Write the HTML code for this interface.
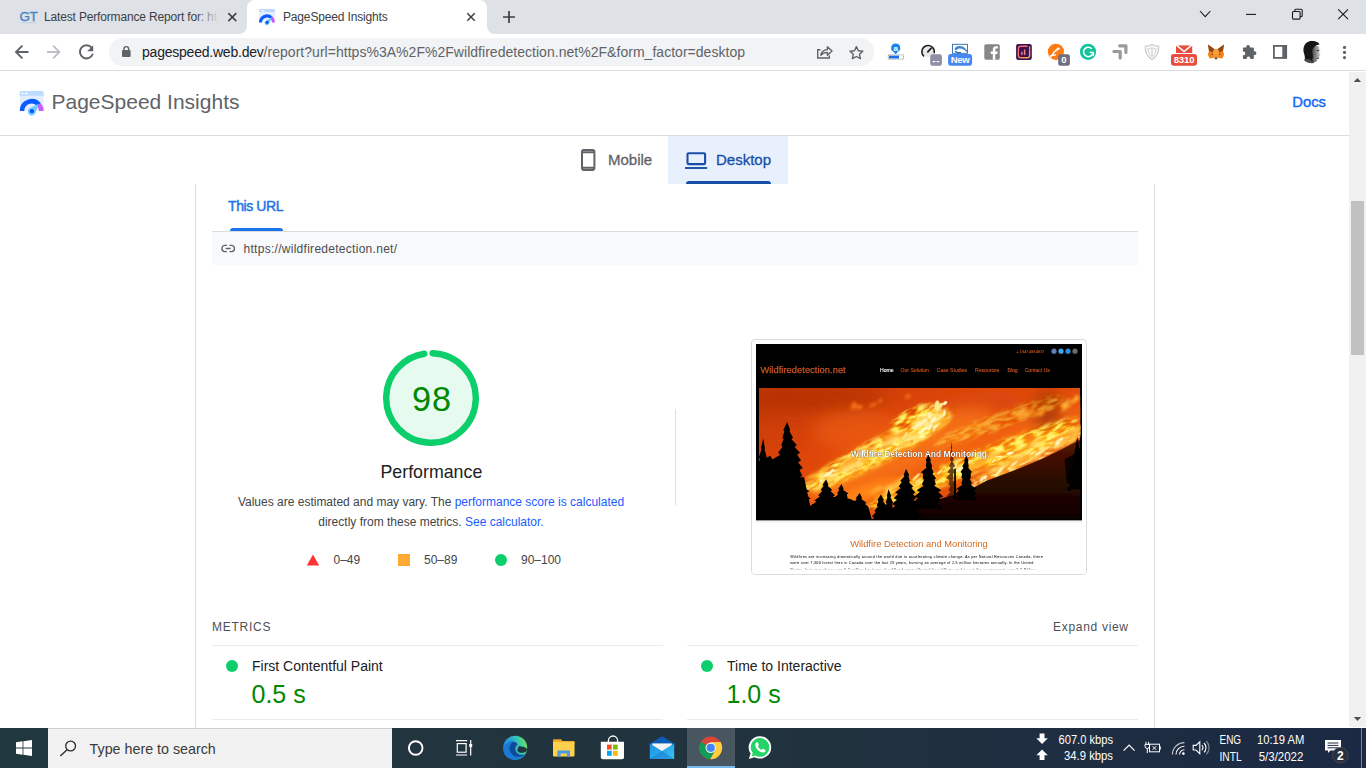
<!DOCTYPE html>
<html lang="en">
<head>
<meta charset="utf-8">
<title>PageSpeed Insights</title>
<style>
*{box-sizing:border-box;margin:0;padding:0}
html,body{width:1366px;height:768px;overflow:hidden;background:#fff;font-family:"Liberation Sans",sans-serif;color:#202124}
.abs{position:absolute}
#root{position:relative;width:1366px;height:768px;overflow:hidden;background:#fff}
/* ---------- browser chrome ---------- */
#tabstrip{left:0;top:0;width:1366px;height:34px;background:#dee1e6}
#tab-active{left:247px;top:0;width:240px;height:34px;background:#fff;border-radius:8px 8px 0 0}
.tabfoot{width:8px;height:8px;top:26px;background:#fff}
.tabfoot i{position:absolute;left:0;top:0;width:8px;height:8px;background:#dee1e6}
.tabtitle{font-size:12px;color:#3c4043;white-space:nowrap;letter-spacing:-.16px}
#toolbar{left:0;top:34px;width:1366px;height:37px;background:#fff;border-bottom:1px solid #dadce0}
#omni{left:108.500px;top:38px;width:765px;height:28px;border-radius:14px;background:#f1f3f4}
#urltext{left:142px;top:44px;font-size:14px;color:#5f6368;white-space:nowrap;letter-spacing:.03px}
#urltext b{font-weight:normal;color:#202124;letter-spacing:-.22px}
/* ---------- page ---------- */
#page{left:0;top:72px;width:1349px;height:656px;background:#fff;overflow:hidden}
#scroll{left:1349px;top:72px;width:17px;height:655px;background:#f1f1f1}
#thumb{left:1351px;top:201px;width:13px;height:153.700px;background:#c1c1c1}
#hdr{left:0;top:0;width:1349px;height:64px;border-bottom:1px solid #dadce0}
#brand{left:51.500px;top:18px;font-size:21px;color:#5f6368;white-space:nowrap}
#docs{left:1292.300px;top:22px;font-size:14.800px;color:#1068f5;font-weight:normal;-webkit-text-stroke:.4px #1068f5}
#desk{left:668px;top:64px;width:120px;height:48px;background:#e8f0fe}
#deskbar{left:686px;top:109px;width:84.500px;height:3px;background:#174ea6;border-radius:3px 3px 0 0}
.tabl{font-size:15px;white-space:nowrap;-webkit-text-stroke:.3px currentColor}
#wrap{left:195px;top:112px;width:960px;height:560px;border-left:1px solid #dadce0;border-right:1px solid #dadce0}

/* ---------- content ---------- */
#thisurl{left:228px;top:126px;font-size:14px;font-weight:normal;-webkit-text-stroke:.45px #1a73e8;letter-spacing:-.4px;color:#1a73e8;white-space:nowrap}
#thisbar{left:230px;top:156px;width:53px;height:3px;background:#1a73e8;border-radius:3px 3px 0 0}
#urlrow{left:212px;top:159px;width:926px;height:34px;background:#f8f9fa;border-top:1px solid #dadce0}
#urlrow span{position:absolute;left:31.5px;top:10px;font-size:12px;letter-spacing:.28px;color:#4a4d51;white-space:nowrap}
#perf{left:331.4px;top:390px;width:200px;text-align:center;font-size:17.8px;color:#212121;white-space:nowrap}
.desc{font-size:12px;color:#424548;white-space:nowrap;width:500px;text-align:center;left:181px}
.desc a{color:#1a5cff;text-decoration:none}
.leg{font-size:12px;color:#424548;white-space:nowrap}
#vsep{left:675px;top:337px;width:1px;height:96px;background:#e0e0e0}
#shot{left:751px;top:267px;width:336px;height:236px;border:1px solid #dadce0;border-radius:4px;background:#fff;overflow:hidden}
.mh{font-size:12px;color:#4d5156;white-space:nowrap;letter-spacing:.75px}
.mline{height:1px;background:#ebebeb;width:451px}
.mdot{width:12px;height:12px;border-radius:50%;background:#0cce6b}
.mname{font-size:14px;color:#212121;white-space:nowrap}
.mval{font-size:25px;color:#008800;white-space:nowrap}
/* ---------- taskbar ---------- */
#taskbar{left:0;top:728px;width:1366px;height:40px;background:linear-gradient(90deg,#22383f 0%,#21333e 55%,#1f2e40 75%,#1c2944 100%)}
#search{left:48px;top:728px;width:344px;height:40px;background:#f2f2f2;border-top:1px solid #cfcfcf}
#search span{position:absolute;left:40px;top:11px;font-size:15px;color:#3b3b3b;white-space:nowrap}
.tray{color:#fff;font-size:12px;white-space:nowrap}
</style>
</head>
<body>
<div id="root">

<!-- ======= TAB STRIP ======= -->
<div id="tabstrip" class="abs"></div>
<div id="tab-active" class="abs"></div>
<div class="abs tabfoot" style="left:239px"><i style="border-radius:0 0 8px 0"></i></div>
<div class="abs tabfoot" style="left:487px"><i style="border-radius:0 0 0 8px"></i></div>
<div class="abs tabtitle" style="left:44px;top:10px">Latest Performance Report for: ht</div>
<div class="abs tabtitle" style="left:283px;top:10px">PageSpeed Insights</div>
<div class="abs" style="left:196px;top:6px;width:27px;height:22px;background:linear-gradient(90deg,rgba(222,225,230,0),#dee1e6 85%)"></div>

<!-- ======= TOOLBAR ======= -->
<div id="toolbar" class="abs"></div>
<div id="omni" class="abs"></div>
<div id="urltext" class="abs"><b>pagespeed.web.dev</b>/report?url=https%3A%2F%2Fwildfiredetection.net%2F&amp;form_factor=desktop</div>


<!-- ======= CHROME ICONS ======= -->
<svg class="abs" style="left:0;top:0" width="1366" height="72" viewBox="0 0 1366 72" font-family="Liberation Sans, sans-serif">
  <!-- tab1 favicon GT -->
  <text x="19.500" y="21" font-size="13.500" fill="#4a86c5" stroke="#4a86c5" stroke-width=".4" letter-spacing="-.5">GT</text>
  <rect x="21" y="22.2" width="15" height="1" fill="#b8d0ea"/>
  <!-- tab close x -->
  <g stroke="#3c4043" stroke-width="1.5" stroke-linecap="butt"><path d="M228.300 13.100l8 8M236.300 13.100l-8 8"/><path d="M467.3 13.3l7.4 7.4M474.7 13.3l-7.4 7.4"/></g>
  <!-- new tab + -->
  <path d="M509 11v12M503 17h12" stroke="#3c4043" stroke-width="1.7"/>
  <!-- pagespeed favicon -->
  <g transform="translate(245.860 -51.630) scale(.667)">
    <rect x="19.700" y="90.900" width="24" height="16" rx="1.500" fill="#e4eeff"/>
    <path d="M19.700 92.400a1.500 1.500 0 0 1 1.500-1.500h21a1.500 1.500 0 0 1 1.500 1.500v3h-24z" fill="#bcd8ff"/>
    <circle cx="22.600" cy="93.300" r=".9" fill="#fff"/><rect x="24.600" y="92.500" width="3.400" height="1.600" rx=".8" fill="#fff"/>
    <path d="M22 111a9.700 9.700 0 0 1 16.300-7.100" fill="none" stroke="#0a5cff" stroke-width="4.600"/>
    <path d="M38.200 103.800a9.700 9.700 0 0 1 3.200 7.200" fill="none" stroke="#c255ff" stroke-width="4.600"/>
    <path d="M38.400 104.400l-3.300 8.400a3.600 3.600 0 1 1-5.400-4.200z" fill="#5cc8ff"/>
    <circle cx="31.800" cy="111.200" r="2.200" fill="#0a50f0"/>
  </g>
  <!-- window controls -->
  <g fill="none" stroke="#1b1b1b" stroke-width="1.1">
    <path d="M1200 11l5.2 5.6 5.2-5.6"/>
    <path d="M1246 14.4h10"/>
    <rect x="1292.5" y="11.5" width="7.6" height="7.6" rx="1"/>
    <path d="M1294.8 11.5v-1.3a1 1 0 0 1 1-1h5.4a1 1 0 0 1 1 1v5.4a1 1 0 0 1-1 1h-1.2"/>
    <path d="M1338.2 9.4l9.8 9.8M1348 9.4l-9.8 9.8"/>
  </g>
  <!-- nav: back / forward / reload -->
  <g fill="none" stroke="#5f6368" stroke-width="1.9">
    <path d="M28.5 52H16.6M22.4 45.6L16 52l6.4 6.4"/>
    <path d="M47 52h11.9M53.1 45.6l6.4 6.4-6.4 6.4" stroke="#bdc1c6"/>
    <path d="M91.6 47.6a6.6 6.6 0 1 0 1.2 6.2"/>
  </g>
  <path d="M93.2 45.2v6h-6z" fill="#5f6368"/>
  <!-- lock -->
  <rect x="122" y="50" width="8.6" height="7" rx="1" fill="#5f6368"/>
  <path d="M123.900 50v-1a2.400 2.400 0 0 1 4.800 0V50" fill="none" stroke="#5f6368" stroke-width="1.4"/>
  <!-- share -->
  <g fill="none" stroke="#5f6368" stroke-width="1.4">
    <path d="M820.5 49.8h-2.8v8.2h11.6v-2.4"/>
    <path d="M820.8 55.2c.6-3.6 3-5.4 6.6-5.6v-2.8l4.6 4.2-4.6 4.2v-2.8c-2.8 0-4.8.8-6.6 2.800z" stroke-linejoin="round"/>
  </g>
  <!-- star -->
  <path d="M856.4 46.6l1.9 4.1 4.5.5-3.3 3.100.9 4.400-4-2.200-4 2.200.9-4.400-3.300-3.100 4.500-.5z" fill="none" stroke="#5f6368" stroke-width="1.4" stroke-linejoin="round"/>
  <!-- ext1: blue a + ruler -->
  <path d="M895.700 43.400a4.500 4.500 0 0 1 2.300 8.400l-2.300 2.400-2.300-2.400a4.500 4.500 0 0 1 2.300-8.400z" fill="#1a83f0"/>
  <text x="895.700" y="50.600" font-size="8" font-weight="bold" fill="#fff" text-anchor="middle">a</text>
  <rect x="888.300" y="54.900" width="15.200" height="4.300" fill="#fff" stroke="#8a7f78" stroke-width=".7" stroke-dasharray="1.200 .6"/>
  <rect x="889" y="55.600" width="10" height="2.900" fill="#1a73e8"/>
  <!-- ext2: speedometer + badge -->
  <circle cx="928.100" cy="51.300" r="5.600" fill="#e9e9e9"/>
  <path d="M923.600 56.000a6.200 6.200 0 1 1 10.600-3.200" fill="none" stroke="#1f1f1f" stroke-width="1.500" stroke-linecap="round"/>
  <path d="M927.800 51.800l3.200-3.400" stroke="#1f1f1f" stroke-width="1.700" stroke-linecap="round"/>
  <rect x="930.200" y="54.200" width="11.700" height="11.600" rx="2.200" fill="#8d8fa6"/>
  <path d="M932.800 61.600h2.600M936.600 61.600h2.600" stroke="#fff" stroke-width="1.100"/>
  <text x="936" y="62" font-size="1" fill="#8d8fa6" text-anchor="middle">--</text>
  <!-- ext3: S + New badge -->
  <rect x="952.500" y="44.300" width="15" height="9" fill="#fff" stroke="#2a6cb0" stroke-width=".9"/>
  <path d="M954.500 49.500c.3-2.300 2.200-3.600 5-3.600 3.300 0 5.800 1.600 7.600 4.800v1.800c-2.200-2.800-4.600-4.100-7.200-4.100-1.600 0-2.700.6-3 1.900z" fill="#3b86c8"/>
  <path d="M955 51.200c1.500 1.300 3.800 1.700 6 1.400" fill="none" stroke="#2a6cb0" stroke-width="1.200"/>
  <rect x="948.100" y="54" width="24" height="11.800" rx="2.800" fill="#4688f1"/>
  <text x="960.100" y="63.300" font-size="9.600" font-weight="bold" fill="#fff" text-anchor="middle" letter-spacing="-.3">New</text>
  <!-- ext4: facebook grey -->
  <rect x="984.300" y="44.200" width="15.500" height="15.500" rx="1.600" fill="#878787"/>
  <path d="M995.300 59.700v-5.800h2.100l.3-2.500h-2.400v-1.500c0-.8.300-1.300 1.400-1.300h1.200v-2.200c-.2 0-1-.1-1.900-.1-1.900 0-3.200 1.200-3.200 3.300v1.800h-2.100v2.500h2.100v5.800z" fill="#fff"/>
  <!-- ext5: purple bars -->
  <defs><linearGradient id="pg" x1="0" y1="0" x2="1" y2="1"><stop offset="0" stop-color="#f0607c"/><stop offset="1" stop-color="#f8a848"/></linearGradient></defs>
  <rect x="1016.100" y="43.900" width="15.700" height="16" rx="2.200" fill="#3a1050"/>
  <path d="M1027 46.200h-6.300a2.300 2.300 0 0 0-2.300 2.300v6.900a2.300 2.300 0 0 0 2.300 2.300h6.600a2.300 2.300 0 0 0 2.300-2.300v-5.300" fill="none" stroke="url(#pg)" stroke-width="1.400" stroke-linecap="round"/>
  <path d="M1021.900 55v-3.200M1024.600 55v-5.400" stroke="#f5807a" stroke-width="1.500"/>
  <path d="M1029.600 47v2" stroke="#f8a848" stroke-width="1.400" stroke-linecap="round"/>
  <!-- ext6: orange circle + 0 badge -->
  <circle cx="1055.900" cy="51.800" r="8.100" fill="#ff7a0f"/>
  <path d="M1050.200 57.600c1.200-3.400 3.600-6.800 7.800-10.400 1 .2 1.700.9 2 1.800-3.600 1.800-6.400 4.400-8.400 8.200z M1049.800 55.400c2.200-1 4.200-1.400 6.600-1.200l-.6 1.400c-2 .1-3.800.5-5.600 1.400z" fill="#fff"/>
  <rect x="1058.200" y="54.200" width="11.700" height="11.600" rx="2.200" fill="#6e6f80"/>
  <text x="1064" y="63.300" font-size="9.600" font-weight="bold" fill="#fff" text-anchor="middle">0</text>
  <!-- ext7: grammarly -->
  <circle cx="1088" cy="51.800" r="8.100" fill="#15c39a"/>
  <path d="M1091.800 48.800a4.700 4.700 0 1 0 1 4.400" fill="none" stroke="#fff" stroke-width="1.500"/>
  <path d="M1089.600 52.400h3.800v3.600" fill="none" stroke="#fff" stroke-width="1.300"/>
  <!-- ext8: grey corner arrows -->
  <path d="M1119.600 45.800h6.300v6.600" fill="none" stroke="#9a9a9a" stroke-width="3.200" stroke-linecap="round" stroke-linejoin="round"/>
  <path d="M1113.900 51.500h6.300v6.500" fill="none" stroke="#9a9a9a" stroke-width="3.200" stroke-linecap="round" stroke-linejoin="round"/>
  <!-- ext9: shield -->
  <path d="M1152 44.600c2.200 1.200 4.400 1.600 6.800 1.600.2 6.200-1.800 10.400-6.800 13.200-5-2.800-7-7-6.800-13.200 2.400 0 4.600-.4 6.800-1.600z" fill="#fafafa" stroke="#c6c6c6" stroke-width="1.100"/>
  <path d="M1152 47.600c1.300.7 2.600 1 4 1-.1 3.600-1.300 6.400-4 8.200-2.700-1.800-3.900-4.600-4-8.200 1.400 0 2.700-.3 4-1z" fill="none" stroke="#cfcfcf" stroke-width=".9"/>
  <path d="M1152 48v8.500" stroke="#d6d6d6" stroke-width="1.400"/>
  <!-- ext10: red mail + 8310 -->
  <path d="M1176 45.400h16.200v7.600h-16.200z" fill="#e74c3c"/>
  <path d="M1176.400 45.200l7.700 6.400 7.700-6.400" fill="none" stroke="#fff" stroke-width="1.500"/>
  <rect x="1171" y="54" width="26" height="11.800" rx="2.800" fill="#e74c3c"/>
  <text x="1184" y="63.300" font-size="9.600" font-weight="bold" fill="#fff" text-anchor="middle" letter-spacing="-.2">8310</text>
  <!-- ext11: metamask fox -->
  <path d="M1208 44.600l6.200 4.400h3.600l6.200-4.400-1 6.400 1.200 3.600-1.800 4-3.600-.6-1.600 1.400h-2.400l-1.600-1.400-3.600.6-1.800-4 1.200-3.600z" fill="#f5841f"/>
  <path d="M1208 44.600l6.200 4.400-1.400 3.600-3.800-1.600z M1224 44.600l-6.200 4.400 1.400 3.600 3.800-1.600z" fill="#8f4a1c"/>
  <path d="M1212.800 52.600l1.400-3.600h3.600l1.400 3.600-1 3.800h-4.400z" fill="#f89c35"/>
  <path d="M1213.600 57.200h4.800l-.6 2.200h-3.600z" fill="#e4d2c4"/>
  <path d="M1214.800 57.600h2.400l-.4 1.200h-1.600z" fill="#161616"/>
  <path d="M1211.400 54l1.800.6M1220.600 54l-1.800.6" stroke="#5a3a22" stroke-width=".8"/>
  <!-- puzzle -->
  <path d="M1243.300 47.600h2.900v-.7a1.900 1.900 0 0 1 3.800 0v.7h2.900a1 1 0 0 1 1 1v2.700h.6a1.900 1.900 0 0 1 0 3.800h-.6v2.900a1 1 0 0 1-1 1h-2.600v-.6a1.800 1.800 0 0 0-3.600 0v.6h-2.800a1 1 0 0 1-1-1v-2.700h.5a1.900 1.900 0 0 0 0-3.800h-.5v-2.900a1 1 0 0 1 .4-1z" fill="#5f6368"/>
  <!-- side panel -->
  <rect x="1273.900" y="45.900" width="12.300" height="12" fill="none" stroke="#5f6368" stroke-width="1.800"/>
  <rect x="1282.300" y="45.500" width="4.700" height="12.800" fill="#5f6368"/>
  <!-- avatar -->
  <clipPath id="avc"><circle cx="1311.800" cy="52" r="11.200"/></clipPath>
  <filter id="avb" x="-10%" y="-10%" width="120%" height="120%"><feGaussianBlur stdDeviation=".5"/></filter>
  <linearGradient id="fcg" x1="0" y1="0" x2="1" y2="0"><stop offset="0" stop-color="#1c1c1c"/><stop offset=".45" stop-color="#6a6a6a"/><stop offset="1" stop-color="#d8d8d8"/></linearGradient>
  <g clip-path="url(#avc)"><g filter="url(#avb)">
    <rect x="1299" y="39" width="26" height="26" fill="#fefefe"/>
    <path d="M1309 48c3-2 7-2.500 10-1.500l.8 4.500-.6 1.800 1.400 2.800-1.400.8.200 1.800-1.800.8-1 2.800-7.600.4z" fill="url(#fcg)"/>
    <path d="M1303.600 52c-.8-6 2.200-10.600 7.600-11.200 4.200-.4 7.400 1 8.400 3.600-2.400.2-4.600 1.200-6 3-1.400 2-1.600 4.200-1 6.600.6 2.400.2 4.200-.6 5.800l2 2.800-3 1.400-6.400-3c.8-2.400.2-5.600-1-9z" fill="#121212"/>
    <path d="M1303 60c2.500-1.200 5-1.400 7-.6l4.500 3-3.500 3.600h-8z" fill="#4a4a4a"/>
    <path d="M1316.600 50.600l2.400-.2M1316.800 58.600l2-.4" stroke="#2a2a2a" stroke-width=".9" fill="none"/>
  </g></g>
  <!-- menu dots -->
  <g fill="#5f6368"><circle cx="1344.500" cy="47.400" r="1.600"/><circle cx="1344.500" cy="52.400" r="1.600"/><circle cx="1344.500" cy="57.600" r="1.600"/></g>
</svg>

<!-- ======= PAGE ======= -->
<div id="page" class="abs">
  <div id="hdr" class="abs"></div>
  <div id="brand" class="abs">PageSpeed Insights</div>
  <div id="docs" class="abs">Docs</div>
  <div id="desk" class="abs"></div>
  <div id="deskbar" class="abs"></div>
  <div class="abs tabl" style="left:608px;top:79px;color:#5f6368">Mobile</div>
  <div class="abs tabl" style="left:716px;top:79px;color:#174ea6">Desktop</div>

  <!-- header icons (page coords) -->
  <svg class="abs" style="left:0;top:0" width="1349" height="120" viewBox="0 72 1349 120">
    <defs><linearGradient id="wg" x1="0" y1="0" x2="0" y2="1"><stop offset="0" stop-color="#c3dafe"/><stop offset=".22" stop-color="#c3dafe"/><stop offset=".23" stop-color="#d8e7ff"/><stop offset="1" stop-color="#e6f0ff"/></linearGradient></defs>
    <rect x="19.700" y="90.900" width="24" height="20.100" rx="1.500" fill="#e2eeff"/>
    <path d="M19.700 92.400a1.500 1.500 0 0 1 1.500-1.500h21a1.500 1.500 0 0 1 1.500 1.500v3.400h-24z" fill="#bcdcff"/>
    <circle cx="22.500" cy="93.400" r=".95" fill="#fff"/><rect x="24.900" y="92.600" width="2.600" height="1.600" rx=".8" fill="#fff"/>
    <path d="M22 111a9.700 9.700 0 0 1 17-6.400" fill="none" stroke="#0a5cff" stroke-width="4.600"/>
    <path d="M38.900 104.500a9.700 9.700 0 0 1 2.500 6.500" fill="none" stroke="#c45cff" stroke-width="4.600"/>
    <path d="M38.700 103.800l-3.100 9a4 4 0 1 1-6-4.600z" fill="#6ccaff"/>
    <circle cx="31.900" cy="111.200" r="2.100" fill="#0a50f0"/>
    <rect x="19" y="111" width="26" height="1" fill="#fff" opacity="0"/>
    <!-- mobile -->
    <rect x="582" y="150.100" width="12.400" height="19.800" rx="1.800" fill="none" stroke="#5f6368" stroke-width="2"/>
    <path d="M582 152.200h12.400M582 167.800h12.400" stroke="#5f6368" stroke-width="2"/>
    <!-- laptop -->
    <rect x="687.500" y="153.300" width="17.600" height="10.800" rx="1" fill="none" stroke="#174ea6" stroke-width="2.100"/>
    <path d="M685 168h22.200" stroke="#174ea6" stroke-width="1.900"/>
  </svg>
  <div id="wrap" class="abs"></div>

  <div id="thisurl" class="abs">This URL</div>
  <div id="thisbar" class="abs"></div>
  <div id="urlrow" class="abs"><span>https://wildfiredetection.net/</span></div>
  <svg class="abs" style="left:220.600px;top:172.200px" width="14.4" height="9" viewBox="0 0 16 10"><path d="M6.6 1.6H4.4a3.4 3.4 0 0 0 0 6.800h2.200M9.400 1.600h2.200a3.400 3.400 0 0 1 0 6.800H9.400M5.200 5h5.600" fill="none" stroke="#5f6368" stroke-width="1.500" stroke-linecap="butt"/></svg>

  <!-- gauge -->
  <svg class="abs" style="left:383px;top:278px" width="96" height="96" viewBox="0 0 120 120">
    <circle cx="60" cy="60" r="56" fill="#e7faf0"/>
    <circle cx="60" cy="60" r="56" fill="none" stroke="#0cce6b" stroke-width="8" stroke-linecap="round" stroke-dasharray="340.8 351.86" transform="rotate(-87.95 60 60)"/>
    <text x="61.3" y="76.2" text-anchor="middle" font-family="Liberation Sans, sans-serif" font-size="42.8" letter-spacing="1.4" fill="#008800">98</text>
  </svg>
  <div id="perf" class="abs">Performance</div>
  <div class="abs desc" style="top:423px">Values are estimated and may vary. The <a>performance score is calculated</a></div>
  <div class="abs desc" style="top:443px">directly from these metrics. <a>See calculator.</a></div>
  <svg class="abs" style="left:306px;top:482px" width="14" height="12" viewBox="0 0 14 12"><path d="M7 0.5L13.2 11.5H0.8Z" fill="#ff3333"/></svg>
  <div class="abs leg" style="left:333.5px;top:481px">0–49</div>
  <div class="abs" style="left:398px;top:482px;width:12px;height:12px;background:#ffaa33"></div>
  <div class="abs leg" style="left:424px;top:481px">50–89</div>
  <div class="abs" style="left:495px;top:482px;width:12px;height:12px;border-radius:50%;background:#0cce6b"></div>
  <div class="abs leg" style="left:521px;top:481px">90–100</div>
  <div id="vsep" class="abs"></div>
  <div id="shot" class="abs"><!--SHOT-S--><svg class="abs" style="left:0;top:0" width="334" height="234" viewBox="752 340 334 234">
<defs>
<clipPath id="fc"><rect x="12.495" y="8.33" width="1336.965" height="545.615"/></clipPath>
<linearGradient id="fbg" x1="0" y1="0" x2="1" y2="1"><stop offset="0" stop-color="#bd3607"/><stop offset=".35" stop-color="#df470a"/><stop offset=".6" stop-color="#e8520c"/><stop offset="1" stop-color="#cc3e08"/></linearGradient>
<linearGradient id="hill" x1="0" y1="0" x2="0" y2="1"><stop offset="0" stop-color="#5a1602"/><stop offset=".5" stop-color="#2a0900"/><stop offset="1" stop-color="#0c0200"/></linearGradient>
<filter id="b6" x="-20%" y="-20%" width="140%" height="140%"><feGaussianBlur stdDeviation="6"/></filter>
<filter id="b14" x="-30%" y="-30%" width="160%" height="160%"><feGaussianBlur stdDeviation="14"/></filter>
<filter id="b30" x="-40%" y="-40%" width="180%" height="180%"><feGaussianBlur stdDeviation="30"/></filter>
<filter id="b3" x="-20%" y="-20%" width="140%" height="140%"><feGaussianBlur stdDeviation="3"/></filter>
<filter id="b2" x="-10%" y="-10%" width="120%" height="120%"><feGaussianBlur stdDeviation="1.6"/></filter>
<filter id="fx" x="0" y="0" width="100%" height="100%" filterUnits="objectBoundingBox"><feGaussianBlur in="SourceGraphic" stdDeviation="9" result="m"/><feTurbulence type="fractalNoise" baseFrequency="0.022 0.075" numOctaves="3" seed="11" result="n"/><feColorMatrix in="n" type="matrix" values="0 0 0 0 1  1.05 0 0 0 0.17  0.8 0 0 0 -0.4  3.6 0 0 0 -1.15" result="c"/><feComposite in="c" in2="m" operator="in"/></filter>
<filter id="fx2" x="0" y="0" width="100%" height="100%" filterUnits="objectBoundingBox"><feGaussianBlur in="SourceGraphic" stdDeviation="7" result="m"/><feTurbulence type="fractalNoise" baseFrequency="0.03 0.09" numOctaves="3" seed="5" result="n"/><feColorMatrix in="n" type="matrix" values="0 0 0 0 1  1.0 0 0 0 0.36  1.4 0 0 0 -0.55  4.2 0 0 0 -1.95" result="c"/><feComposite in="c" in2="m" operator="in"/></filter>
</defs>
<rect x="756" y="344" width="326" height="176.6" fill="#000"/>
<g transform="translate(756 386) scale(0.24010)" clip-path="url(#fc)">
<rect x="0" y="0" width="1366" height="566" fill="url(#fbg)"/>
<g filter="url(#b30)">
<ellipse cx="250" cy="50" rx="300" ry="55" fill="#b23006" opacity=".7"/>
<ellipse cx="600" cy="290" rx="430" ry="90" fill="#f8741a" opacity=".85" transform="rotate(-26 600 290)"/>
<ellipse cx="1030" cy="250" rx="380" ry="70" fill="#f66c12" opacity=".8" transform="rotate(-24 1030 250)"/>
<ellipse cx="1215" cy="105" rx="60" ry="95" fill="#a83606" opacity=".85"/>
<ellipse cx="950" cy="60" rx="190" ry="40" fill="#d8460a" opacity=".8"/>
<ellipse cx="430" cy="190" rx="190" ry="90" fill="#f06018" opacity=".55"/>
</g>
<g filter="url(#b14)">
<ellipse cx="510" cy="290" rx="320" ry="34" fill="#ff9a22" transform="rotate(-28 510 290)"/>
<ellipse cx="715" cy="150" rx="70" ry="48" fill="#ffb63a" transform="rotate(-45 715 150)"/>
<ellipse cx="900" cy="330" rx="420" ry="26" fill="#ff8e1e" transform="rotate(-22 900 330)"/>
<ellipse cx="1140" cy="290" rx="230" ry="26" fill="#ff9c26" transform="rotate(-28 1140 290)"/>
<ellipse cx="470" cy="440" rx="150" ry="34" fill="#ff8418" transform="rotate(-18 470 440)"/>
</g>
<g transform="rotate(-27 500 270)"><g filter="url(#fx)"><rect x="110" y="180" width="800" height="180" fill="none"/><ellipse cx="500" cy="275" rx="350" ry="52" fill="#fff"/><ellipse cx="700" cy="235" rx="110" ry="60" fill="#fff"/></g></g>
<g transform="rotate(-23 900 320)"><g filter="url(#fx)"><rect x="380" y="230" width="1050" height="180" fill="none"/><ellipse cx="900" cy="322" rx="480" ry="40" fill="#fff"/><ellipse cx="1150" cy="350" rx="220" ry="36" fill="#fff"/></g></g>
<g transform="rotate(-20 1000 150)"><g filter="url(#fx)" opacity=".45"><rect x="700" y="70" width="660" height="160" fill="none"/><ellipse cx="1010" cy="150" rx="290" ry="34" fill="#fff"/></g></g>
<g transform="rotate(-50 715 150)"><g filter="url(#fx2)"><rect x="600" y="60" width="240" height="180" fill="none"/><ellipse cx="715" cy="150" rx="85" ry="50" fill="#fff"/></g></g>
<g transform="rotate(-27 500 270)"><g filter="url(#fx2)"><rect x="110" y="200" width="800" height="140" fill="none"/><ellipse cx="480" cy="275" rx="320" ry="34" fill="#fff"/></g></g>
<g transform="rotate(-25 1120 300)"><g filter="url(#fx2)"><rect x="800" y="240" width="640" height="130" fill="none"/><ellipse cx="1120" cy="305" rx="280" ry="28" fill="#fff"/></g></g>
<g filter="url(#b6)">
<ellipse cx="389" cy="327" rx="20" ry="10" fill="#ffc040" transform="rotate(-36 389 327)"/>
<ellipse cx="735" cy="116" rx="31" ry="8" fill="#ffc040" transform="rotate(-30 735 116)"/>
<ellipse cx="682" cy="150" rx="38" ry="13" fill="#ffd868" transform="rotate(-30 682 150)"/>
<ellipse cx="232" cy="400" rx="22" ry="9" fill="#ffa828" transform="rotate(-31 232 400)"/>
<ellipse cx="409" cy="298" rx="37" ry="10" fill="#ffa828" transform="rotate(-36 409 298)"/>
<ellipse cx="634" cy="212" rx="34" ry="10" fill="#ffd868" transform="rotate(-23 634 212)"/>
<ellipse cx="556" cy="226" rx="43" ry="11" fill="#ffa828" transform="rotate(-40 556 226)"/>
<ellipse cx="390" cy="312" rx="32" ry="10" fill="#ffa828" transform="rotate(-46 390 312)"/>
<ellipse cx="471" cy="264" rx="34" ry="6" fill="#ffa828" transform="rotate(-27 471 264)"/>
<ellipse cx="566" cy="230" rx="40" ry="10" fill="#ffd868" transform="rotate(-29 566 230)"/>
<ellipse cx="238" cy="373" rx="40" ry="6" fill="#ffb030" transform="rotate(-25 238 373)"/>
<ellipse cx="615" cy="246" rx="27" ry="9" fill="#ffc040" transform="rotate(-27 615 246)"/>
<ellipse cx="759" cy="145" rx="34" ry="8" fill="#ffcc50" transform="rotate(-39 759 145)"/>
<ellipse cx="466" cy="294" rx="23" ry="9" fill="#ffcc50" transform="rotate(-39 466 294)"/>
<ellipse cx="710" cy="156" rx="31" ry="9" fill="#ffcc50" transform="rotate(-20 710 156)"/>
<ellipse cx="289" cy="347" rx="25" ry="9" fill="#ffb030" transform="rotate(-29 289 347)"/>
<ellipse cx="365" cy="331" rx="38" ry="8" fill="#ffa828" transform="rotate(-44 365 331)"/>
<ellipse cx="778" cy="152" rx="33" ry="12" fill="#ffa828" transform="rotate(-18 778 152)"/>
<ellipse cx="440" cy="268" rx="38" ry="6" fill="#ffcc50" transform="rotate(-46 440 268)"/>
<ellipse cx="456" cy="289" rx="21" ry="10" fill="#ffb030" transform="rotate(-31 456 289)"/>
<ellipse cx="555" cy="211" rx="30" ry="10" fill="#ffa828" transform="rotate(-17 555 211)"/>
<ellipse cx="412" cy="330" rx="50" ry="9" fill="#ffc040" transform="rotate(-33 412 330)"/>
<ellipse cx="310" cy="386" rx="33" ry="11" fill="#ffcc50" transform="rotate(-31 310 386)"/>
<ellipse cx="773" cy="109" rx="35" ry="6" fill="#ffc040" transform="rotate(-31 773 109)"/>
<ellipse cx="612" cy="199" rx="23" ry="11" fill="#ffa828" transform="rotate(-31 612 199)"/>
<ellipse cx="396" cy="337" rx="50" ry="12" fill="#ffd868" transform="rotate(-22 396 337)"/>
<ellipse cx="1106" cy="265" rx="27" ry="5" fill="#ffb030" transform="rotate(-40 1106 265)"/>
<ellipse cx="872" cy="336" rx="26" ry="10" fill="#ffb030" transform="rotate(-18 872 336)"/>
<ellipse cx="1297" cy="198" rx="23" ry="6" fill="#ffa828" transform="rotate(-34 1297 198)"/>
<ellipse cx="1330" cy="180" rx="43" ry="7" fill="#ffc040" transform="rotate(-20 1330 180)"/>
<ellipse cx="1270" cy="234" rx="30" ry="6" fill="#ffb030" transform="rotate(-16 1270 234)"/>
<ellipse cx="558" cy="437" rx="30" ry="9" fill="#ffcc50" transform="rotate(-38 558 437)"/>
<ellipse cx="607" cy="389" rx="43" ry="10" fill="#ffa828" transform="rotate(-36 607 389)"/>
<ellipse cx="1327" cy="198" rx="32" ry="6" fill="#ffc040" transform="rotate(-41 1327 198)"/>
<ellipse cx="941" cy="314" rx="42" ry="10" fill="#ffb030" transform="rotate(-34 941 314)"/>
<ellipse cx="655" cy="408" rx="26" ry="8" fill="#ffc040" transform="rotate(-14 655 408)"/>
<ellipse cx="1258" cy="220" rx="34" ry="10" fill="#ffa828" transform="rotate(-28 1258 220)"/>
<ellipse cx="574" cy="416" rx="42" ry="10" fill="#ffcc50" transform="rotate(-22 574 416)"/>
<ellipse cx="619" cy="416" rx="33" ry="7" fill="#ffa828" transform="rotate(-24 619 416)"/>
<ellipse cx="898" cy="347" rx="18" ry="6" fill="#ffc040" transform="rotate(-40 898 347)"/>
<ellipse cx="913" cy="335" rx="43" ry="8" fill="#ffa828" transform="rotate(-21 913 335)"/>
<ellipse cx="989" cy="287" rx="31" ry="10" fill="#ffcc50" transform="rotate(-25 989 287)"/>
<ellipse cx="1089" cy="296" rx="24" ry="8" fill="#ffd868" transform="rotate(-11 1089 296)"/>
<ellipse cx="578" cy="411" rx="18" ry="6" fill="#ffb030" transform="rotate(-39 578 411)"/>
<ellipse cx="1163" cy="237" rx="37" ry="9" fill="#ffcc50" transform="rotate(-36 1163 237)"/>
<ellipse cx="1304" cy="230" rx="28" ry="8" fill="#ffcc50" transform="rotate(-9 1304 230)"/>
<ellipse cx="609" cy="409" rx="26" ry="6" fill="#ffb030" transform="rotate(-31 609 409)"/>
<ellipse cx="489" cy="440" rx="17" ry="7" fill="#ffa828" transform="rotate(-21 489 440)"/>
<ellipse cx="1295" cy="230" rx="23" ry="10" fill="#ffb030" transform="rotate(-38 1295 230)"/>
<ellipse cx="512" cy="427" rx="20" ry="8" fill="#ffb030" transform="rotate(-12 512 427)"/>
<ellipse cx="1079" cy="322" rx="26" ry="7" fill="#ffcc50" transform="rotate(-37 1079 322)"/>
<ellipse cx="1078" cy="334" rx="29" ry="9" fill="#ffcc50" transform="rotate(-43 1078 334)"/>
<ellipse cx="937" cy="381" rx="22" ry="8" fill="#ffb030" transform="rotate(-16 937 381)"/>
<ellipse cx="1164" cy="291" rx="37" ry="10" fill="#ffcc50" transform="rotate(-38 1164 291)"/>
<ellipse cx="985" cy="352" rx="32" ry="6" fill="#ffcc50" transform="rotate(-30 985 352)"/>
<ellipse cx="1026" cy="364" rx="15" ry="5" fill="#ffcc50" transform="rotate(-30 1026 364)"/>
<ellipse cx="1121" cy="301" rx="30" ry="8" fill="#ffa828" transform="rotate(-25 1121 301)"/>
<ellipse cx="1265" cy="245" rx="31" ry="10" fill="#ffcc50" transform="rotate(-35 1265 245)"/>
<ellipse cx="1075" cy="306" rx="17" ry="5" fill="#ffb030" transform="rotate(-22 1075 306)"/>
<ellipse cx="1080" cy="323" rx="23" ry="8" fill="#ffa828" transform="rotate(-15 1080 323)"/>
<ellipse cx="1002" cy="350" rx="18" ry="7" fill="#ffb030" transform="rotate(-38 1002 350)"/>
<ellipse cx="1329" cy="211" rx="37" ry="7" fill="#ffc040" transform="rotate(-35 1329 211)"/>
<ellipse cx="1039" cy="327" rx="30" ry="6" fill="#ffc040" transform="rotate(-21 1039 327)"/>
<ellipse cx="1007" cy="344" rx="15" ry="5" fill="#ffcc50" transform="rotate(-36 1007 344)"/>
<ellipse cx="875" cy="207" rx="14" ry="7" fill="#ffb43c" transform="rotate(-13 875 207)"/>
<ellipse cx="1002" cy="175" rx="14" ry="6" fill="#ff9a26" transform="rotate(-17 1002 175)"/>
<ellipse cx="1223" cy="93" rx="20" ry="6" fill="#ffb43c" transform="rotate(-22 1223 93)"/>
<ellipse cx="1184" cy="118" rx="10" ry="6" fill="#ffb43c" transform="rotate(-12 1184 118)"/>
<ellipse cx="1154" cy="97" rx="11" ry="4" fill="#ff9a26" transform="rotate(-26 1154 97)"/>
<ellipse cx="999" cy="128" rx="10" ry="5" fill="#ffa832" transform="rotate(-30 999 128)"/>
<ellipse cx="831" cy="212" rx="22" ry="5" fill="#ff9a26" transform="rotate(-17 831 212)"/>
<ellipse cx="1177" cy="119" rx="30" ry="4" fill="#ff9a26" transform="rotate(-14 1177 119)"/>
<ellipse cx="1190" cy="104" rx="19" ry="5" fill="#ff9a26" transform="rotate(-16 1190 104)"/>
<ellipse cx="1121" cy="98" rx="14" ry="4" fill="#ffa832" transform="rotate(-14 1121 98)"/>
<ellipse cx="1107" cy="118" rx="22" ry="7" fill="#ff9a26" transform="rotate(-35 1107 118)"/>
<ellipse cx="1138" cy="113" rx="21" ry="5" fill="#ffb43c" transform="rotate(-34 1138 113)"/>
<ellipse cx="931" cy="197" rx="10" ry="5" fill="#ffa832" transform="rotate(-12 931 197)"/>
<ellipse cx="1294" cy="92" rx="32" ry="3" fill="#ffb43c" transform="rotate(-35 1294 92)"/>
<ellipse cx="1086" cy="113" rx="30" ry="5" fill="#ffb43c" transform="rotate(-10 1086 113)"/>
<ellipse cx="995" cy="172" rx="19" ry="4" fill="#ffb43c" transform="rotate(-8 995 172)"/>
<ellipse cx="1030" cy="123" rx="18" ry="4" fill="#ff9a26" transform="rotate(-11 1030 123)"/>
<ellipse cx="971" cy="153" rx="33" ry="4" fill="#ffb43c" transform="rotate(-38 971 153)"/>
<ellipse cx="955" cy="157" rx="34" ry="5" fill="#ffa832" transform="rotate(-26 955 157)"/>
<ellipse cx="1194" cy="90" rx="11" ry="6" fill="#ff9a26" transform="rotate(-18 1194 90)"/>
<ellipse cx="1284" cy="78" rx="11" ry="5" fill="#ffc040" transform="rotate(-25 1284 78)"/>
<ellipse cx="1329" cy="59" rx="21" ry="6" fill="#ffc040" transform="rotate(-33 1329 59)"/>
<ellipse cx="1334" cy="46" rx="10" ry="7" fill="#ffa828" transform="rotate(-40 1334 46)"/>
<ellipse cx="1279" cy="80" rx="12" ry="7" fill="#ffb030" transform="rotate(-25 1279 80)"/>
<ellipse cx="1295" cy="69" rx="17" ry="4" fill="#ffc040" transform="rotate(-35 1295 69)"/>
<ellipse cx="1290" cy="80" rx="11" ry="8" fill="#ffd868" transform="rotate(-24 1290 80)"/>
<ellipse cx="1301" cy="62" rx="10" ry="6" fill="#ffb030" transform="rotate(-46 1301 62)"/>
<ellipse cx="1289" cy="86" rx="18" ry="6" fill="#ffa828" transform="rotate(-43 1289 86)"/>
<ellipse cx="431" cy="86" rx="14" ry="5" fill="#f8701a" transform="rotate(-24 431 86)"/>
<ellipse cx="410" cy="83" rx="16" ry="4" fill="#f8701a" transform="rotate(-26 410 83)"/>
<ellipse cx="412" cy="90" rx="18" ry="6" fill="#f8701a" transform="rotate(-20 412 90)"/>
<ellipse cx="488" cy="78" rx="18" ry="6" fill="#f8701a" transform="rotate(-28 488 78)"/>
<ellipse cx="433" cy="90" rx="9" ry="5" fill="#ff8420" transform="rotate(-14 433 90)"/>
<ellipse cx="406" cy="74" rx="10" ry="5" fill="#ff8420" transform="rotate(-35 406 74)"/>
<ellipse cx="632" cy="43" rx="13" ry="5" fill="#ff8420" transform="rotate(-33 632 43)"/>
<ellipse cx="518" cy="61" rx="11" ry="5" fill="#ff8420" transform="rotate(-36 518 61)"/>
</g>
<g filter="url(#b3)">
<ellipse cx="772" cy="127" rx="22" ry="5" fill="#fff2b0" transform="rotate(-33 772 127)"/>
<ellipse cx="273" cy="395" rx="10" ry="5" fill="#fff6c8" transform="rotate(-16 273 395)"/>
<ellipse cx="294" cy="370" rx="15" ry="6" fill="#fff6c8" transform="rotate(-25 294 370)"/>
<ellipse cx="445" cy="277" rx="13" ry="7" fill="#fff6c8" transform="rotate(-55 445 277)"/>
<ellipse cx="759" cy="158" rx="12" ry="5" fill="#ffe070" transform="rotate(-21 759 158)"/>
<ellipse cx="320" cy="372" rx="22" ry="6" fill="#ffe88a" transform="rotate(-14 320 372)"/>
<ellipse cx="743" cy="143" rx="12" ry="8" fill="#ffe88a" transform="rotate(-51 743 143)"/>
<ellipse cx="620" cy="208" rx="20" ry="5" fill="#ffe88a" transform="rotate(-53 620 208)"/>
<ellipse cx="740" cy="138" rx="23" ry="7" fill="#fff6c8" transform="rotate(-56 740 138)"/>
<ellipse cx="710" cy="174" rx="11" ry="4" fill="#fff6c8" transform="rotate(-54 710 174)"/>
<ellipse cx="746" cy="169" rx="12" ry="5" fill="#fff6c8" transform="rotate(-19 746 169)"/>
<ellipse cx="312" cy="358" rx="17" ry="6" fill="#fff6c8" transform="rotate(-42 312 358)"/>
<ellipse cx="273" cy="402" rx="21" ry="4" fill="#ffe88a" transform="rotate(-56 273 402)"/>
<ellipse cx="665" cy="171" rx="10" ry="6" fill="#ffe070" transform="rotate(-41 665 171)"/>
<ellipse cx="761" cy="135" rx="20" ry="5" fill="#ffe88a" transform="rotate(-45 761 135)"/>
<ellipse cx="638" cy="222" rx="23" ry="4" fill="#ffe88a" transform="rotate(-18 638 222)"/>
<ellipse cx="725" cy="170" rx="15" ry="6" fill="#fff6c8" transform="rotate(-64 725 170)"/>
<ellipse cx="671" cy="165" rx="23" ry="7" fill="#fff2b0" transform="rotate(-49 671 165)"/>
<ellipse cx="723" cy="123" rx="14" ry="9" fill="#fff2b0" transform="rotate(-84 723 123)"/>
<ellipse cx="692" cy="154" rx="19" ry="7" fill="#fff2b0" transform="rotate(-58 692 154)"/>
<ellipse cx="784" cy="111" rx="13" ry="5" fill="#fff6c8" transform="rotate(-83 784 111)"/>
<ellipse cx="787" cy="71" rx="11" ry="7" fill="#fff2b0" transform="rotate(-38 787 71)"/>
<ellipse cx="755" cy="123" rx="11" ry="9" fill="#ffe070" transform="rotate(-72 755 123)"/>
<ellipse cx="707" cy="146" rx="13" ry="6" fill="#fff2b0" transform="rotate(-79 707 146)"/>
<ellipse cx="691" cy="189" rx="17" ry="6" fill="#fff6c8" transform="rotate(-43 691 189)"/>
<ellipse cx="762" cy="85" rx="21" ry="9" fill="#ffe88a" transform="rotate(-37 762 85)"/>
<ellipse cx="753" cy="78" rx="18" ry="9" fill="#ffe88a" transform="rotate(-77 753 78)"/>
<ellipse cx="710" cy="158" rx="13" ry="9" fill="#ffe88a" transform="rotate(-35 710 158)"/>
<ellipse cx="738" cy="121" rx="10" ry="7" fill="#ffe070" transform="rotate(-86 738 121)"/>
<ellipse cx="666" cy="220" rx="21" ry="9" fill="#ffe070" transform="rotate(-65 666 220)"/>
<ellipse cx="667" cy="379" rx="21" ry="5" fill="#ffe88a" transform="rotate(-45 667 379)"/>
<ellipse cx="1168" cy="246" rx="17" ry="6" fill="#ffe070" transform="rotate(-30 1168 246)"/>
<ellipse cx="848" cy="334" rx="23" ry="4" fill="#ffe070" transform="rotate(-23 848 334)"/>
<ellipse cx="847" cy="347" rx="21" ry="6" fill="#fff6c8" transform="rotate(-31 847 347)"/>
<ellipse cx="676" cy="396" rx="15" ry="6" fill="#ffe070" transform="rotate(-30 676 396)"/>
<ellipse cx="887" cy="314" rx="17" ry="6" fill="#ffe88a" transform="rotate(-8 887 314)"/>
<ellipse cx="992" cy="311" rx="12" ry="4" fill="#fff2b0" transform="rotate(-41 992 311)"/>
<ellipse cx="1263" cy="228" rx="21" ry="7" fill="#fff2b0" transform="rotate(-39 1263 228)"/>
<ellipse cx="1190" cy="260" rx="14" ry="5" fill="#ffe88a" transform="rotate(-20 1190 260)"/>
<ellipse cx="1255" cy="242" rx="11" ry="6" fill="#fff6c8" transform="rotate(-38 1255 242)"/>
<ellipse cx="1012" cy="294" rx="17" ry="3" fill="#fff2b0" transform="rotate(-7 1012 294)"/>
<ellipse cx="824" cy="338" rx="20" ry="7" fill="#ffe88a" transform="rotate(-46 824 338)"/>
<ellipse cx="1058" cy="280" rx="16" ry="6" fill="#fff6c8" transform="rotate(-14 1058 280)"/>
<ellipse cx="765" cy="358" rx="15" ry="5" fill="#ffe88a" transform="rotate(-40 765 358)"/>
<ellipse cx="1177" cy="280" rx="17" ry="5" fill="#fff2b0" transform="rotate(-32 1177 280)"/>
<ellipse cx="1253" cy="246" rx="12" ry="4" fill="#ffe88a" transform="rotate(-17 1253 246)"/>
<ellipse cx="941" cy="388" rx="12" ry="5" fill="#fff6c8" transform="rotate(-48 941 388)"/>
<ellipse cx="1195" cy="270" rx="9" ry="5" fill="#ffe88a" transform="rotate(-22 1195 270)"/>
<ellipse cx="1014" cy="354" rx="19" ry="6" fill="#fff2b0" transform="rotate(-45 1014 354)"/>
<ellipse cx="954" cy="380" rx="10" ry="6" fill="#fff6c8" transform="rotate(-40 954 380)"/>
<ellipse cx="987" cy="371" rx="10" ry="4" fill="#ffe070" transform="rotate(-30 987 371)"/>
<ellipse cx="1075" cy="323" rx="16" ry="4" fill="#fff6c8" transform="rotate(-38 1075 323)"/>
</g>
<g filter="url(#b2)" opacity=".7" fill="#2a0800">
<path d="M815 232 L817 257 L816 264 L818 283 L816 289 L824 308 L818 314 L830 333 L820 340 L828 359 L820 365 L822 384 L818 390 L834 409 L822 416 L840 435 L824 441 L847 460 L826 466 L825 460 L805 460 L807 466 L793 460 L810 441 L802 435 L810 416 L801 409 L807 390 L792 384 L809 365 L797 359 L811 340 L804 333 L813 314 L808 308 L813 289 L809 283 L814 264 L811 257Z"/>
</g>
<path filter="url(#b2)" d="M470 566 L540 525 L640 495 L760 472 L880 438 L960 395 L1080 350 L1200 300 L1300 250 L1366 215 L1366 566Z" fill="url(#hill)"/>
<g fill="#060100" filter="url(#b2)">
<path d="M130 150 L142 182 L140 190 L154 214 L148 222 L170 246 L161 254 L183 278 L171 286 L188 310 L175 318 L195 342 L181 350 L193 374 L179 382 L187 406 L175 414 L224 438 L203 446 L227 470 L205 478 L211 502 L193 510 L252 534 L225 542 L214 566 L196 574 L190 566 L70 566 L45 574 L20 566 L68 542 L50 534 L62 510 L43 502 L37 478 L11 470 L64 446 L46 438 L81 414 L67 406 L91 382 L80 374 L77 350 L62 342 L76 318 L61 310 L101 286 L92 278 L110 254 L105 246 L115 222 L110 214 L118 190 L114 182Z"/>
<path d="M30 218 L37 257 L36 266 L44 295 L41 305 L56 334 L50 344 L63 373 L56 382 L59 411 L53 421 L67 450 L59 460 L68 489 L60 498 L99 527 L83 537 L88 566 L76 576 L61 566 L-1 566 L-12 576 L-23 566 L-21 537 L-36 527 L-12 498 L-24 489 L3 460 L-5 450 L-7 421 L-17 411 L6 382 L-1 373 L14 344 L10 334 L16 305 L12 295 L23 266 L21 257Z"/>
<path d="M0 320 L60 290 L110 380 L200 380 L240 566 L0 566Z"/>
<path d="M292 388 L301 410 L299 416 L317 432 L311 438 L329 455 L321 460 L347 477 L335 483 L336 499 L327 505 L336 522 L327 527 L358 544 L343 549 L349 566 L337 572 L331 566 L253 566 L221 572 L201 566 L246 549 L233 544 L243 527 L230 522 L241 505 L227 499 L254 483 L243 477 L266 460 L259 455 L275 438 L270 432 L281 416 L278 410Z"/>
<path d="M356 408 L365 428 L363 433 L385 448 L378 452 L382 467 L377 472 L397 487 L388 492 L415 507 L402 512 L407 526 L396 531 L404 546 L394 551 L443 566 L424 571 L393 566 L319 566 L291 571 L272 566 L292 551 L275 546 L316 531 L305 526 L325 512 L316 507 L321 492 L311 487 L329 472 L322 467 L342 452 L338 448 L346 433 L343 428Z"/>
<path d="M432 446 L442 466 L439 471 L460 486 L454 491 L471 506 L463 511 L469 526 L461 531 L477 546 L467 551 L488 566 L476 571 L463 566 L401 566 L376 571 L361 566 L402 551 L394 546 L406 531 L398 526 L406 511 L399 506 L413 491 L408 486 L419 471 L416 466Z"/>
<path d="M225 500 L270 470 L330 462 L390 470 L440 492 L470 510 L485 566 L225 566Z"/>
<path d="M520 452 L533 475 L529 480 L543 498 L537 503 L549 520 L542 526 L563 543 L552 549 L558 566 L548 572 L542 566 L498 566 L484 572 L472 566 L492 549 L483 543 L499 526 L493 520 L507 503 L503 498 L510 480 L506 475Z"/>
<path d="M552 430 L563 457 L560 464 L571 484 L566 491 L571 512 L566 518 L584 539 L576 546 L591 566 L581 573 L569 566 L535 566 L529 573 L522 566 L525 546 L516 539 L538 518 L533 512 L544 491 L541 484 L547 464 L545 457Z"/>
<path d="M625 346 L638 370 L635 377 L641 395 L637 401 L655 419 L647 425 L664 444 L654 450 L667 468 L656 474 L680 493 L667 499 L679 517 L666 523 L691 542 L675 548 L683 566 L668 572 L660 566 L590 566 L569 572 L550 566 L583 548 L569 542 L577 523 L561 517 L580 499 L565 493 L587 474 L574 468 L591 450 L580 444 L602 425 L594 419 L607 401 L601 395 L618 377 L615 370Z"/>
<path d="M720 283 L728 308 L726 315 L734 333 L731 340 L740 359 L735 365 L750 384 L743 390 L749 409 L742 415 L772 434 L759 441 L780 460 L765 466 L764 485 L753 491 L781 510 L765 516 L753 510 L687 510 L661 516 L641 510 L673 491 L657 485 L674 466 L659 460 L682 441 L669 434 L698 415 L691 409 L700 390 L694 384 L696 365 L687 359 L710 340 L707 333 L710 315 L707 308Z"/>
<path d="M876 288 L885 311 L883 317 L886 335 L884 341 L900 358 L894 364 L895 382 L890 387 L899 405 L893 411 L918 428 L907 434 L918 452 L908 457 L923 475 L912 481 L898 475 L854 475 L847 481 L838 475 L841 457 L829 452 L845 434 L835 428 L860 411 L855 405 L861 387 L856 382 L858 364 L852 358 L864 341 L859 335 L869 317 L867 311Z"/>
<path d="M826 345 L832 345 L834 470 L824 470Z"/>
<path d="M1338 212 L1344 243 L1343 251 L1356 274 L1351 282 L1357 305 L1352 313 L1357 337 L1353 344 L1367 368 L1360 376 L1374 399 L1365 407 L1394 430 L1380 438 L1360 430 L1316 430 L1305 438 L1294 430 L1312 407 L1304 399 L1310 376 L1301 368 L1320 344 L1315 337 L1323 313 L1318 305 L1329 282 L1326 274 L1333 251 L1332 243Z"/>
<path d="M1285 305 L1366 260 L1366 430 L1295 405Z" opacity=".85"/>
</g>
</g>
<g font-family="Liberation Sans, sans-serif">
<text x="760.4" y="373" font-size="9.3" fill="#c9521f" stroke="#c9521f" stroke-width=".25" textLength="85.3">Wildfiredetection.net</text>
<g font-size="5.1" fill="#c9521f" stroke="#c9521f" stroke-width=".12"><text x="880" y="372.3" fill="#fff" stroke="#fff">Home</text><text x="900.5" y="372.3">Our Solution</text><text x="936.8" y="372.3">Case Studies</text><text x="975" y="372.3">Resources</text><text x="1007.4" y="372.3">Blog</text><text x="1024.7" y="372.3">Contact Us</text></g>
<text x="1016.4" y="352.6" font-size="3.6" fill="#c9521f" stroke="#c9521f" stroke-width=".12" textLength="27.6">+ 1 647 493 4972</text>
<circle cx="1054" cy="351.2" r="2.6" fill="#5f7cb4"/><circle cx="1061" cy="351.2" r="2.6" fill="#3ea4ee"/><circle cx="1068" cy="351.2" r="2.6" fill="#2d8fd4"/><circle cx="1075" cy="351.2" r="2.6" fill="#6a6a6a"/>
<text x="919" y="456.6" font-size="8.45" font-weight="bold" fill="#fff" text-anchor="middle" style="text-shadow:0 0 1px #000">Wildfire Detection And Monitoring</text>
<text x="919" y="547.2" font-size="9.35" fill="#d2691e" text-anchor="middle">Wildfire Detection and Monitoring</text>
<g font-size="3.75" fill="#2a2a2a" stroke="#2a2a2a" stroke-width=".04"><text x="790.3" y="557.6" textLength="252.5">Wildfires are increasing dramatically around the world due to accelerating climate change. As per Natural Resources Canada, there</text>
<text x="790.3" y="564.3" textLength="243">were over 7,300 forest fires in Canada over the last 25 years, burning an average of 2.5 million hectares annually. In the United</text>
<text x="790.3" y="571" textLength="245">States, last year alone over 5.2 million hectares of wildland were affected by wildfires and it cost the government over 5.2 Billion</text></g>
</g>
<rect x="752" y="569.3" width="334" height="5" fill="#fff"/>
<rect x="756" y="520.6" width="326" height="2.2" fill="#f3f3f3"/>
</svg><!--SHOT-E--></div>

  <!-- metrics -->
  <div class="abs mh" style="left:212px;top:548px">METRICS</div>
  <div class="abs mh" style="left:1053px;top:548px;letter-spacing:.7px">Expand view</div>
  <div class="abs mline" style="left:212px;top:573px"></div>
  <div class="abs mline" style="left:687px;top:573px"></div>
  <div class="abs mdot" style="left:226px;top:588px"></div>
  <div class="abs mname" style="left:252px;top:586px">First Contentful Paint</div>
  <div class="abs mval" style="left:251.500px;top:608px">0.5 s</div>
  <div class="abs mdot" style="left:701px;top:588px"></div>
  <div class="abs mname" style="left:727px;top:586px">Time to Interactive</div>
  <div class="abs mval" style="left:726.500px;top:608px">1.0 s</div>
  <div class="abs mline" style="left:212px;top:647px"></div>
  <div class="abs mline" style="left:687px;top:647px"></div>

</div>
<div id="scroll" class="abs"></div>
<div id="thumb" class="abs"></div>
<svg class="abs" style="left:1349px;top:72px" width="17" height="656" viewBox="1349 72 17 656"><path d="M1353.700 82h7.400l-3.700-4.100z" fill="#505050"/><path d="M1353.800 716.900h7.400l-3.700 4z" fill="#505050"/></svg>

<!-- ======= TASKBAR ======= -->
<div id="taskbar" class="abs"></div>
<div id="search" class="abs"></div>

<svg class="abs" style="left:0;top:728px" width="1366" height="40" viewBox="0 728 1366 40" font-family="Liberation Sans, sans-serif">
  <defs>
    <linearGradient id="edg" x1="0" y1=".6" x2="1" y2=".3"><stop offset="0" stop-color="#1d84dc"/><stop offset=".4" stop-color="#2aa6d8"/><stop offset=".75" stop-color="#3ecfa0"/><stop offset="1" stop-color="#76e052"/></linearGradient>
    <linearGradient id="mlg" x1="0" y1="0" x2="1" y2="1"><stop offset="0" stop-color="#1f8fe0"/><stop offset=".5" stop-color="#28a8ea"/><stop offset="1" stop-color="#3cc8f4"/></linearGradient>
  </defs>
  <!-- windows logo -->
  <g fill="#fff"><path d="M16 742.200l6.600-.9v6.300h-6.600zM23.400 741.200l8.600-1.200v7.600h-8.600zM16 748.400h6.600v6.300l-6.600-.9zM23.400 748.400h8.600v7.600l-8.600-1.200z"/></g>
  <!-- search -->
  <circle cx="70.600" cy="746" r="4.900" fill="none" stroke="#2b2b2b" stroke-width="1.300"/>
  <path d="M67 749.800l-6.600 6.200" stroke="#2b2b2b" stroke-width="1.400"/>
  <text x="89.600" y="754" font-size="15" fill="#3a3a3a" textLength="126.200" lengthAdjust="spacingAndGlyphs">Type here to search</text>
  <!-- cortana -->
  <circle cx="415.700" cy="748" r="6.800" fill="none" stroke="#fff" stroke-width="1.900"/>
  <!-- task view -->
  <g fill="none" stroke="#fff" stroke-width="1.200">
    <rect x="457.300" y="743.600" width="8.800" height="8.600"/>
    <path d="M456 740.600h11.200M456 755h11.200M470.700 740v15.400"/>
  </g>
  <rect x="469.200" y="744" width="3" height="3" fill="#fff"/>
  <!-- edge -->
  <circle cx="515.200" cy="747.800" r="12" fill="url(#edg)"/>
  <path d="M503.300 749.400c.2 6 5.200 10.400 11.800 10.400 4.400 0 8-2 10.200-5.200-2 1-4.200 1.400-6.400 1-4.800-.8-8-4.400-7.800-8.800.1-2.400 1.200-4.600 3-6-5.800.4-10.600 4-10.800 8.600z" fill="#1b78d4"/>
  <path d="M513.600 741.800c-2.800 1.400-4.400 4.400-4 7.600.6 4.600 4.800 7.800 9.600 7.400 2.200-.2 4.200-1.200 5.600-2.600-1.800.8-3.800.8-5.600.2-3-1.200-4.600-4-3.800-6.800.4-1.400 1.200-2.400 2.400-3-1.200-1.800-2.600-2.800-4.200-2.800z" fill="#0d4a98"/>
  <path d="M517.400 750.200c0-1.400 1.200-2.200 1-3.800 3.800-.2 6.800.8 8.800 2.800-.4 2-2 3.400-4.600 3.600-2.800.2-5-.8-5.200-2.600z" fill="#22353f"/>
  <!-- explorer -->
  <path d="M553 740.200a1 1 0 0 1 1-1h7l1.400 1.800h12v3h-21.400z" fill="#f0a61a"/>
  <rect x="553" y="741.800" width="21.500" height="14.600" rx=".8" fill="#ffd04c"/>
  <path d="M557.400 756.400v-5.800h12.600v5.800h-3.200v-3h-6.200v3z" fill="#4a9ce8"/>
  <!-- store -->
  <path d="M608.400 742.200v-1.600a4.600 4.600 0 0 1 9.200 0v1.600" fill="none" stroke="#fff" stroke-width="1.300"/>
  <path d="M600.800 741.800h23.200v15.400a2 2 0 0 1-2 2h-19.200a2 2 0 0 1-2-2z" fill="#fff"/>
  <rect x="607" y="744.600" width="4.700" height="5" fill="#f25022"/><rect x="613" y="744.600" width="4.700" height="5" fill="#7fba00"/>
  <rect x="607" y="750.800" width="4.700" height="5" fill="#00a4ef"/><rect x="613" y="750.800" width="4.700" height="5" fill="#ffb900"/>
  <!-- mail -->
  <path d="M649.800 743.400l12.200-7.200 12.200 7.200v2h-24.400z" fill="#0a5cb8"/>
  <path d="M652.200 743.400h19.600v9h-19.600z" fill="#f4f4f4"/>
  <path d="M649.800 743.600l12.200 7.400 12.200-7.400v15.300h-24.400z" fill="url(#mlg)"/>
  <path d="M649.800 758.900l12.200-7.900 12.200 7.900z" fill="#1a78d0" opacity=".55"/>
  <!-- chrome (active) -->
  <rect x="687" y="728" width="48" height="40" fill="#48575f"/>
  <rect x="687" y="766" width="48" height="2" fill="#76b9ed"/>
  <circle cx="710.700" cy="747.800" r="11.400" fill="#db4437"/>
  <path d="M710.700 747.800l-9.870 5.700a11.400 11.400 0 0 1-.0-11.400 11.400 11.400 0 0 0 0 0z" fill="#0f9d58"/>
  <path d="M700.830 742.100a11.400 11.400 0 0 0 9.400 17.090l5.400-9.400-5-2z" fill="#0f9d58"/>
  <path d="M710.230 759.190a11.400 11.400 0 0 0 10.340-17.100h-10.300l5.200 7.600z" fill="#ffcd40"/>
  <circle cx="710.700" cy="747.800" r="5.200" fill="#f1f1f1"/>
  <circle cx="710.700" cy="747.800" r="4.100" fill="#4285f4"/>
  <!-- whatsapp -->
  <path d="M760 736.200a11.200 11.200 0 0 1 0 22.400c-2 0-3.800-.5-5.400-1.300l-5.800 1.700 1.800-5.400a11.200 11.200 0 0 1 9.400-17.400z" fill="#fff"/>
  <path d="M760 738a9.400 9.400 0 0 1 0 18.800c-1.800 0-3.500-.5-4.900-1.400l-3.500 1 1.100-3.300a9.400 9.400 0 0 1 7.300-15.100z" fill="#25d366"/>
  <path d="M756.300 742.600c.4-.5 1.200-.5 1.500 0l.9 1.900c.2.400 0 .9-.3 1.200l-.6.600c.8 1.600 2 2.800 3.700 3.600l.7-.8c.3-.3.700-.4 1.100-.2l1.900 1c.5.300.5 1 .2 1.400-.7 1-1.900 1.400-3.100 1.100-3.500-.8-6.300-3.600-7-7-.1-1.100.2-2.100 1-2.800z" fill="#fff"/>
  <!-- tray -->
  <g fill="#fff">
    <path d="M1039.600 733.500h4.900v4.700h3.300l-5.750 5.700-5.750-5.700h3.300z"/>
    <path d="M1039.600 759.900h4.900v-4.700h3.300l-5.750-5.700-5.750 5.700h3.300z"/>
    <text x="1058.500" y="743.900" font-size="12.300" textLength="54.500" lengthAdjust="spacingAndGlyphs">607.0 kbps</text>
    <text x="1064" y="759.900" font-size="12.300" textLength="49" lengthAdjust="spacingAndGlyphs">34.9 kbps</text>
    <text x="1219.500" y="743.500" font-size="12" textLength="21.600" lengthAdjust="spacingAndGlyphs">ENG</text>
    <text x="1219.500" y="760.700" font-size="12" textLength="22.200" lengthAdjust="spacingAndGlyphs">INTL</text>
    <text x="1257" y="743.500" font-size="12" textLength="47.400" lengthAdjust="spacingAndGlyphs">10:19 AM</text>
    <text x="1258.700" y="760.700" font-size="12" textLength="44.700" lengthAdjust="spacingAndGlyphs">5/3/2022</text>
  </g>
  <path d="M1123.600 750.600l5.500-5.600 5.500 5.600" fill="none" stroke="#fff" stroke-width="1.200"/>
  <!-- battery plug -->
  <g fill="none" stroke="#fff" stroke-width="1">
    <rect x="1149.500" y="744.200" width="10" height="7.600"/>
    <path d="M1160.300 746.400v3.200"/>
    <path d="M1152.600 746.200l3.600 3.600M1156.200 746.200l-3.600 3.600"/>
    <path d="M1146 741.800v2.400M1148.600 741.800v2.400M1145 744.400h4.600v1.800a2.300 2.300 0 0 1-4.600 0zM1147.300 748.400v4.600"/>
  </g>
  <!-- wifi -->
  <g fill="none" stroke="#fff" stroke-width="1.100">
    <path d="M1172.400 754.600a12 12 0 0 1 12-12" opacity=".75"/>
    <path d="M1176 754.600a8.400 8.400 0 0 1 8.400-8.400"/>
    <path d="M1179.600 754.600a4.800 4.800 0 0 1 4.800-4.800"/>
  </g>
  <circle cx="1183.400" cy="753.600" r="1.300" fill="#fff"/>
  <!-- volume -->
  <g fill="none" stroke="#fff" stroke-width="1.100">
    <path d="M1193.200 745.400h2.800l3.800-3.600v11.800l-3.800-3.600h-2.800z"/>
    <path d="M1201.800 745.200a3.600 3.600 0 0 1 0 5"/>
    <path d="M1204 743a6.600 6.600 0 0 1 0 9.400"/>
    <path d="M1206.300 741a9.600 9.600 0 0 1 0 13.400" opacity=".45"/>
  </g>
  <!-- notifications -->
  <path d="M1325 740h16v10.600h-10.600l-2.400 2.400v-2.400h-3z" fill="#fff"/>
  <path d="M1327.600 743h10.800M1327.600 745.400h10.800M1327.600 747.800h10.800" stroke="#1e2a3e" stroke-width="1"/>
  <circle cx="1340.400" cy="755.200" r="7.800" fill="#2b2f3c" stroke="#4a4e5a" stroke-width=".8"/>
  <text x="1340.400" y="759.600" font-size="12" fill="#fff" text-anchor="middle" font-weight="bold">2</text>
  <path d="M1361.500 728v40" stroke="#7a8090" stroke-width="1"/>
</svg>


</div>
</body>
</html>
